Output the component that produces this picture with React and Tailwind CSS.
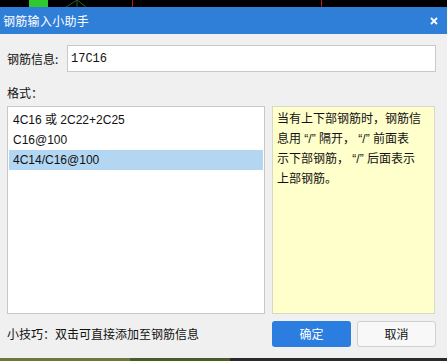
import React, { useState } from 'react';

const cjk = { fontFamily: '"Noto Sans CJK SC", "Liberation Sans", sans-serif' };
const latinFirst = { fontFamily: '"Liberation Sans", "Noto Sans CJK SC", sans-serif' };

const formats = ['4C16 或 2C22+2C25', 'C16@100', '4C14/C16@100'];

const tipLines = [
  '当有上下部钢筋时，钢筋信',
  '息用 “/” 隔开， “/” 前面表',
  '示下部钢筋， “/” 后面表示',
  '上部钢筋。',
];

const TopStrip = () => (
  <svg width="447" height="7" className="block">
    <rect width="447" height="7" fill="#000" />
    <rect x="29" y="0" width="19" height="7" fill="#2fc92f" />
    <path d="M66 7 L77 0 M77 0 L86 7 M77 0 L77 7" stroke="#2c5a2c" strokeWidth="1" />
    <rect x="132" y="0" width="1" height="7" fill="#c01818" />
    <rect x="321" y="0" width="1" height="7" fill="#c01818" />
  </svg>
);

const App = () => {
  const [value, setValue] = useState('17C16');
  const [selected, setSelected] = useState(2);

  return (
    <div className="w-[447px] h-[361px] overflow-hidden bg-black" style={cjk}>
      <TopStrip />
      <div className="h-[27px] bg-[#2f7ed8] flex items-center justify-between pl-[3px] pr-[9px]">
        <span className="text-white text-[12px] tracking-[0.3px]">钢筋输入小助手</span>
        <svg width="8" height="8" viewBox="0 0 8 8">
          <path d="M1 1 L7 7 M7 1 L1 7" stroke="#fff" strokeWidth="1.8" />
        </svg>
      </div>
      <div className="h-[324px] bg-[#f0f0f0] pl-[7px] pr-[11px] text-[12px] text-[#111]">
        <div className="flex items-center pt-[11px]">
          <span className="w-[60px] shrink-0">钢筋信息:</span>
          <input
            className="flex-1 h-[27px] border border-[#c9c9c9] bg-white px-[3px] text-[12px] outline-none font-['Liberation_Mono',monospace]"
            value={value}
            onChange={(e) => setValue(e.target.value)}
          />
        </div>
        <div className="mt-[12px] leading-[17px]">格式：</div>
        <div className="flex mt-[5px] h-[208px] gap-[7px] pr-[1px]">
          <div className="w-[258px] shrink-0 border border-[#c8c8c8] bg-white p-[1px] pt-[3px]">
            {formats.map((f, i) => (
              <div
                key={f}
                onClick={() => setSelected(i)}
                className={`h-[20px] leading-[20px] pl-[4px] text-[12px] ${i === selected ? 'bg-[#b3d7f3]' : ''}`}
                style={latinFirst}
              >
                {f}
              </div>
            ))}
          </div>
          <div
            className="flex-1 min-w-0 overflow-hidden border border-[#d8d8c8] bg-[#ffffcc] pl-[4px] pt-[2px] leading-[20px] text-[12px] whitespace-pre"
            style={latinFirst}
          >
            {tipLines.map((l) => (
              <div key={l}>{l}</div>
            ))}
          </div>
        </div>
        <div className="flex items-center mt-[7px]">
          <span className="flex-1">小技巧：双击可直接添加至钢筋信息</span>
          <button className="w-[79px] h-[26px] rounded-[3px] bg-[#2b7de0] text-white text-[12px]">确定</button>
          <button className="w-[79px] h-[26px] rounded-[3px] ml-[6px] border border-[#cfcfcf] bg-[#f8f8f8] text-[12px] text-[#111]">取消</button>
        </div>
      </div>
      <div className="flex h-[3px]">
        <div className="w-[130px] bg-[#6b7a3a]" />
        <div className="w-[100px] bg-[#4a5a2a]" />
        <div className="flex-1 bg-[#2a2a2a]" />
      </div>
    </div>
  );
};

export default App;
